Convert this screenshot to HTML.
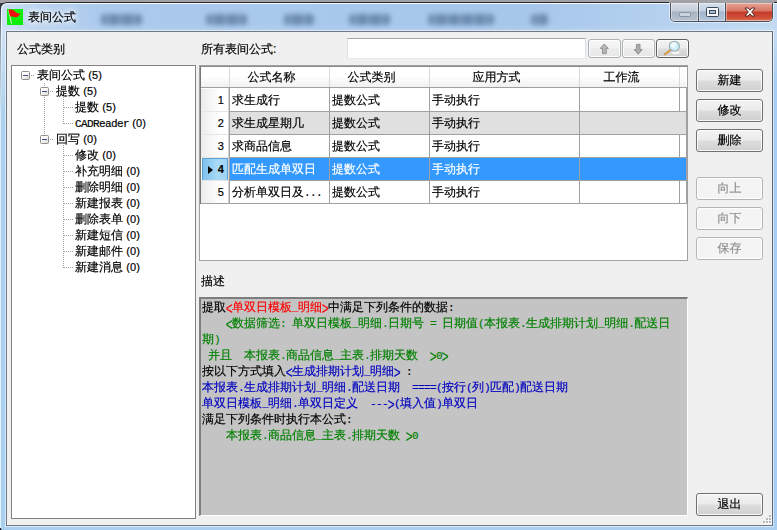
<!DOCTYPE html>
<html lang="zh-CN">
<head>
<meta charset="utf-8">
<title>表间公式</title>
<style>
*{box-sizing:border-box;margin:0;padding:0}
html,body{width:777px;height:530px;overflow:hidden;background:#3c3c3c}
body{position:relative;font-family:"Liberation Sans","WenQuanYi Zen Hei","Noto Sans CJK SC",sans-serif;font-size:12px;line-height:16px;color:#000;-webkit-text-stroke:.18px}
.abs{position:absolute}
.a{font-family:"Liberation Mono","WenQuanYi Zen Hei",monospace;font-size:11px;letter-spacing:-.6px}
/* window frame */
#top{left:0;top:0;width:777px;height:3px;background:#a3a1a6}
#win{left:0;top:2px;width:782px;height:540px;border:1px solid #262a2f;border-radius:7px 0 0 0;background:#a8c8ec;overflow:hidden}
#glass{left:0;top:0;width:780px;height:540px;border-left:1px solid #f4f9ff;border-top:1px solid #f4f9ff;border-radius:6px 0 0 0;
 background:linear-gradient(180deg,rgba(255,255,255,0) 0,rgba(255,255,255,0) 20px,rgba(255,255,255,.18) 30px,rgba(255,255,255,.1) 100%),linear-gradient(90deg,#cbdef3 0,#bad3ef 40px,#abcaec 100px,#a8c8ec 300px,#a6c6ea 520px,#b2cfee 640px,#c2daf2 777px)}
#client{left:6px;top:31px;width:767px;height:495px;background:#f0f0f0;border:1px solid #6f7884;border-right-color:#5f6975;border-bottom-color:#6f7884;box-shadow:0 0 0 1px rgba(255,255,255,.55)}
.blob{position:absolute;background:repeating-linear-gradient(90deg,#47678b 0,#6d8cb0 7px,#47678b 13px);filter:blur(2.5px);border-radius:4px;opacity:.7}

/* title */
#icon{left:7px;top:9px;width:16px;height:16px}
#title{left:28px;top:9px;height:16px;line-height:16px;font-size:12px;text-shadow:0 0 6px #fff,0 0 6px #fff,0 0 8px #fff}
#caps{left:670px;top:3px;width:103px;height:19px;border:1px solid #4a5260;border-top:none;border-radius:0 0 5px 5px;overflow:hidden;box-shadow:0 0 0 1px rgba(255,255,255,.55)}
#caps div{position:absolute;top:0;height:18px}
#bmin{left:0;width:28px;box-shadow:inset 0 0 0 1px rgba(255,255,255,.4);background:linear-gradient(#d9dfe8 0,#c4ccd8 45%,#a7b2c1 50%,#b8c2cf 100%);border-right:1px solid #4a5260}
#bmax{left:28px;width:27px;box-shadow:inset 0 0 0 1px rgba(255,255,255,.4);background:linear-gradient(#d6e1ee 0,#c0cfe0 45%,#a3b6cc 50%,#b5c6d9 100%);border-right:1px solid #4a5260}
#bclose{left:55px;width:47px;border-radius:0 0 4px 0;box-shadow:inset 0 0 0 1px rgba(255,255,255,.4);background:linear-gradient(#e8a596 0,#d67362 45%,#c43a26 50%,#d0523a 85%,#dd8163 100%)}
/* labels */
.lbl{height:16px;line-height:16px;white-space:nowrap}
/* tree */
#tree{left:11px;top:65px;width:185px;height:454px;background:#fff;border:1px solid #828282}
.tn{position:absolute;height:16px;line-height:16px;white-space:nowrap}
.pm{position:absolute;width:9px;height:9px;border:1px solid #8e8e8e;border-radius:1.5px;background:linear-gradient(135deg,#fff 0,#fff 40%,#d8d5cc 100%)}
.pm:after{content:"";position:absolute;left:1px;top:3px;width:5px;height:1px;background:#3b4c8c}
.dv{position:absolute;width:1px;background:repeating-linear-gradient(#a0a0a0 0 1px,transparent 1px 2px)}
.dh{position:absolute;height:1px;background:repeating-linear-gradient(90deg,#a0a0a0 0 1px,transparent 1px 2px)}
/* grid */
#gridbox{left:199px;top:65px;width:489px;height:196px;background:#fff;border:1px solid #a0a0a0}
#grid{left:200px;top:66px;width:487px;height:138px;background:#fff;border-left:1px solid #767676;border-top:1px solid #8a8a8a}
.hc{position:absolute;top:67px;height:20px;line-height:21px;text-align:center;padding-right:16px;background:linear-gradient(#fff 0,#fff 45%,#f1f1f1 100%);border-right:1px solid #dadada}
.row{position:absolute;left:201px;width:486px;height:23px}
.cell{position:absolute;top:0;height:23px;line-height:22px;padding-left:3px;white-space:nowrap;overflow:hidden}
.rh{position:absolute;left:0;top:0;width:27px;height:22px;line-height:22px;text-align:right;padding-right:4px;background:linear-gradient(90deg,#ececec 0,#fff 70%)}
.vl{position:absolute;width:1px;background:#a0a0a0}
.hl{position:absolute;height:1px;background:#a0a0a0}
/* buttons */
.btn{position:absolute;width:67px;height:23px;border:1px solid #707070;border-radius:3px;text-align:center;line-height:20px;
 background:linear-gradient(#f2f2f2 0,#ebebeb 48%,#dddddd 52%,#cfcfcf 100%);box-shadow:inset 0 0 0 1px rgba(255,255,255,.85)}
.btn.dis{border-color:#b2b6b9;background:#f4f4f4;color:#8e8e8e}
.sbtn{position:absolute;top:39px;height:19px;border:1px solid #adb2b5;border-radius:3px;background:linear-gradient(#f6f6f6 0,#f1f1f1 48%,#ebebeb 52%,#e8e8e8 100%);box-shadow:inset 0 0 0 1px rgba(255,255,255,.85)}
#search{left:347px;top:38px;width:239px;height:21px;background:#fff;border:1px solid #dbdfe6;border-top-color:#a4a6ac;border-bottom-color:#e3e9ef}
/* desc */
#desc{left:199px;top:297px;width:489px;height:219px;background:#c4c4c4;border-left:2px solid #7d7d7d;border-top:2px solid #7d7d7d;border-right:1px solid #fff;border-bottom:1px solid #fff}
#desctext{left:202px;top:299px;width:484px;line-height:16px;white-space:pre}
.dl{height:16px;line-height:16px;overflow:visible;white-space:pre}
.dl .a,.tn .a,.tn .c,.cell .a{line-height:0}
.k{display:inline-block;width:6px;height:0;font-family:"Liberation Mono",monospace;font-size:11px;letter-spacing:-.6px;line-height:0;transform:scale(1.05,1.5);transform-origin:50% -3px}
.c{font-family:"Liberation Sans",sans-serif;font-size:11px;letter-spacing:.15px}
.r{color:#ff0000}.g{color:#008000}.b{color:#0000c0}
</style>
</head>
<body>
<div id="top" class="abs"></div>
<div id="win" class="abs">
 <div id="glass" class="abs"></div>
 <div class="abs" style="left:0;top:20px;width:6px;height:520px;background:linear-gradient(rgba(169,208,238,0) 0,#a9d0ee 100px)"></div>
 <div class="abs" style="left:772px;top:20px;width:8px;height:520px;background:linear-gradient(rgba(169,205,242,0) 0,#a9cdf2 60px)"></div>
 <div class="abs" style="left:0;top:523px;width:780px;height:10px;background:#aacfef"></div>

</div>
<div class="blob" style="left:101px;top:14px;width:41px;height:11px"></div>
<div class="blob" style="left:206px;top:14px;width:41px;height:11px"></div>
<div class="blob" style="left:284px;top:14px;width:30px;height:11px"></div>
<div class="blob" style="left:349px;top:14px;width:41px;height:11px"></div>
<div class="blob" style="left:428px;top:14px;width:66px;height:11px"></div>
<div class="blob" style="left:531px;top:14px;width:17px;height:11px"></div>
<div class="abs" style="left:0;top:9px;width:1px;height:521px;background:linear-gradient(#3a3f47 0,#8d9aa9 28px,#dceffb 110px,#e0f4ff 100%)"></div>
<div id="client" class="abs"></div>

<svg id="icon" class="abs" viewBox="0 0 16 16"><rect width="16" height="16" fill="#0cee0c"/><path d="M1.7 1 L4.5 14.6" stroke="#e6f2dc" stroke-width="1" fill="none"/><path d="M1.5 0.9 C4 -0.2 6.5 0.8 8 2.6 C9.6 4.4 11.4 4.9 13.6 4.3 C12.4 6.8 10.4 8.4 8.2 8.2 C6.2 7.8 5 7 3.2 7.6 Z" fill="#f20d0d"/></svg>
<div id="title" class="abs">表间公式</div>
<div id="caps" class="abs"><div id="bmin"></div><div id="bmax"></div><div id="bclose"></div></div>
<div class="abs lbl" style="left:17px;top:41px">公式类别</div>
<div class="abs lbl" style="left:201px;top:41px">所有表间公式:</div>
<div id="search" class="abs"></div>
<div class="sbtn" style="left:588px;width:33px"></div>
<div class="sbtn" style="left:622px;width:33px"></div>
<div class="sbtn" style="left:656px;width:33px;border-color:#606060;background:linear-gradient(#f2f2f2 0,#ebebeb 48%,#dddddd 52%,#cfcfcf 100%)"></div>
<div id="tree" class="abs"></div>
<div class="tn" style="left:37px;top:67px">表间公式<span class="c"> (5)</span></div>
<div class="pm" style="left:21px;top:71px"></div>
<div class="dh" style="left:31px;top:75px;width:4px"></div>
<div class="tn" style="left:56px;top:83px">提数<span class="c"> (5)</span></div>
<div class="pm" style="left:40px;top:87px"></div>
<div class="dh" style="left:50px;top:91px;width:4px"></div>
<div class="tn" style="left:75px;top:99px">提数<span class="c"> (5)</span></div>
<div class="dh" style="left:64px;top:107px;width:9px"></div>
<div class="tn" style="left:75px;top:115px"><span class="a">CADReader</span><span class="c"> (0)</span></div>
<div class="dh" style="left:64px;top:123px;width:9px"></div>
<div class="tn" style="left:56px;top:131px">回写<span class="c"> (0)</span></div>
<div class="pm" style="left:40px;top:135px"></div>
<div class="dh" style="left:50px;top:139px;width:4px"></div>
<div class="tn" style="left:75px;top:147px">修改<span class="c"> (0)</span></div>
<div class="dh" style="left:64px;top:155px;width:9px"></div>
<div class="tn" style="left:75px;top:163px">补充明细<span class="c"> (0)</span></div>
<div class="dh" style="left:64px;top:171px;width:9px"></div>
<div class="tn" style="left:75px;top:179px">删除明细<span class="c"> (0)</span></div>
<div class="dh" style="left:64px;top:187px;width:9px"></div>
<div class="tn" style="left:75px;top:195px">新建报表<span class="c"> (0)</span></div>
<div class="dh" style="left:64px;top:203px;width:9px"></div>
<div class="tn" style="left:75px;top:211px">删除表单<span class="c"> (0)</span></div>
<div class="dh" style="left:64px;top:219px;width:9px"></div>
<div class="tn" style="left:75px;top:227px">新建短信<span class="c"> (0)</span></div>
<div class="dh" style="left:64px;top:235px;width:9px"></div>
<div class="tn" style="left:75px;top:243px">新建邮件<span class="c"> (0)</span></div>
<div class="dh" style="left:64px;top:251px;width:9px"></div>
<div class="tn" style="left:75px;top:259px">新建消息<span class="c"> (0)</span></div>
<div class="dh" style="left:64px;top:267px;width:9px"></div>
<div class="dv" style="left:44px;top:83px;height:4px"></div>
<div class="dv" style="left:44px;top:97px;height:38px"></div>
<div class="dv" style="left:63px;top:97px;height:27px"></div>
<div class="dv" style="left:63px;top:145px;height:123px"></div>
<div id="gridbox" class="abs"></div>
<div id="grid" class="abs"></div>
<div class="hc" style="left:201px;width:29px"></div>
<div class="hc" style="left:230px;width:100px">公式名称</div>
<div class="hc" style="left:330px;width:100px">公式类别</div>
<div class="hc" style="left:430px;width:150px">应用方式</div>
<div class="hc" style="left:580px;width:100px">工作流</div>
<div class="hc" style="left:680px;width:6px;padding:0;border-right:none"></div>
<div class="row" style="top:89px"><div class="rh"><span class="c">1</span></div><div class="cell" style="left:28px;width:458px;background:#fff"></div><div class="cell" style="left:28px;width:100px;color:#000">求生成行</div><div class="cell" style="left:128px;width:100px;color:#000">提数公式</div><div class="cell" style="left:228px;width:150px;color:#000">手动执行</div></div>
<div class="row" style="top:112px"><div class="rh"><span class="c">2</span></div><div class="cell" style="left:28px;width:458px;background:#e0e0e0"></div><div class="cell" style="left:28px;width:100px;color:#000">求生成星期几</div><div class="cell" style="left:128px;width:100px;color:#000">提数公式</div><div class="cell" style="left:228px;width:150px;color:#000">手动执行</div></div>
<div class="row" style="top:135px"><div class="rh"><span class="c">3</span></div><div class="cell" style="left:28px;width:458px;background:#fff"></div><div class="cell" style="left:28px;width:100px;color:#000">求商品信息</div><div class="cell" style="left:128px;width:100px;color:#000">提数公式</div><div class="cell" style="left:228px;width:150px;color:#000">手动执行</div></div>
<div class="row" style="top:158px"><div class="rh" style="background:linear-gradient(90deg,#7fc1ee 0,#a9daf6 60%,#9fd3f5 100%);border:1px solid #5aa2d8;line-height:20px;height:23px;left:1px;width:26px;padding-right:3px;font-weight:bold"><span class="abs" style="left:5px;top:7px;width:0;height:0;border-left:5px solid #000;border-top:4.5px solid transparent;border-bottom:4.5px solid transparent"></span><span class="c">4</span></div><div class="cell" style="left:28px;width:458px;background:#3399ff"></div><div class="cell" style="left:28px;width:100px;color:#fff">匹配生成单双日</div><div class="cell" style="left:128px;width:100px;color:#fff">提数公式</div><div class="cell" style="left:228px;width:150px;color:#fff">手动执行</div></div>
<div class="row" style="top:181px"><div class="rh"><span class="c">5</span></div><div class="cell" style="left:28px;width:458px;background:#fff"></div><div class="cell" style="left:28px;width:100px;color:#000">分析单双日及<span class="a">...</span></div><div class="cell" style="left:128px;width:100px;color:#000">提数公式</div><div class="cell" style="left:228px;width:150px;color:#000">手动执行</div></div>
<div class="vl" style="left:228px;top:88px;height:116px;background:#d4d4d4"></div><div class="vl" style="left:229px;top:87px;height:117px"></div>
<div class="vl" style="left:329px;top:87px;height:117px"></div>
<div class="vl" style="left:429px;top:87px;height:117px"></div>
<div class="vl" style="left:579px;top:87px;height:117px"></div>
<div class="vl" style="left:679px;top:87px;height:25px"></div><div class="vl" style="left:679px;top:134px;height:24px"></div><div class="vl" style="left:679px;top:180px;height:24px"></div>
<div class="vl" style="left:686px;top:88px;height:116px"></div>
<div class="hl" style="left:201px;top:87px;width:486px"></div>
<div class="hl" style="left:201px;top:111px;width:27px;background:#e6e6e6"></div><div class="hl" style="left:229px;top:111px;width:458px"></div>
<div class="hl" style="left:201px;top:134px;width:27px;background:#e6e6e6"></div><div class="hl" style="left:229px;top:134px;width:458px"></div>
<div class="hl" style="left:201px;top:157px;width:27px;background:#e6e6e6"></div><div class="hl" style="left:229px;top:157px;width:458px"></div>
<div class="hl" style="left:201px;top:180px;width:27px;background:#e6e6e6"></div><div class="hl" style="left:229px;top:180px;width:458px"></div>
<div class="hl" style="left:201px;top:203px;width:486px"></div>
<div class="btn" style="left:696px;top:69px">新建</div>
<div class="btn" style="left:696px;top:99px">修改</div>
<div class="btn" style="left:696px;top:129px">删除</div>
<div class="btn dis" style="left:696px;top:177px">向上</div>
<div class="btn dis" style="left:696px;top:207px">向下</div>
<div class="btn dis" style="left:696px;top:237px">保存</div>
<div class="btn" style="left:696px;top:493px">退出</div>
<div class="abs lbl" style="left:201px;top:273px">描述</div>
<div id="desc" class="abs"></div>
<div id="desctext" class="abs"><div class="dl">提取<span class="r"><span class="k">&lt;</span>单双日模板<span class="a">_</span>明细<span class="k">&gt;</span></span>中满足下列条件的数据<span class="a">:</span></div><div class="dl"><span class="g"><span class="a">    </span><span class="k">&lt;</span>数据筛选<span class="a">: </span>单双日模板<span class="a">_</span>明细<span class="a">.</span>日期号<span class="a"> = </span>日期值<span class="a">(</span>本报表<span class="a">.</span>生成排期计划<span class="a">_</span>明细<span class="a">.</span>配送日</span></div><div class="dl"><span class="g">期<span class="a">)</span></span></div><div class="dl"><span class="g"><span class="a"> </span>并且<span class="a">  </span>本报表<span class="a">.</span>商品信息<span class="a">_</span>主表<span class="a">.</span>排期天数<span class="a">  </span><span class="k">&gt;</span><span class="a">0</span><span class="k">&gt;</span></span></div><div class="dl">按以下方式填入<span class="b"><span class="k">&lt;</span>生成排期计划<span class="a">_</span>明细<span class="k">&gt;</span></span><span class="a"> :</span></div><div class="dl"><span class="b">本报表<span class="a">.</span>生成排期计划<span class="a">_</span>明细<span class="a">.</span>配送日期<span class="a">  ====(</span>按行<span class="a">(</span>列<span class="a">)</span>匹配<span class="a">)</span>配送日期</span></div><div class="dl"><span class="b">单双日模板<span class="a">_</span>明细<span class="a">.</span>单双日定义<span class="a">  ---</span><span class="k">&gt;</span><span class="a">(</span>填入值<span class="a">)</span>单双日</span></div><div class="dl">满足下列条件时执行本公式<span class="a">:</span></div><div class="dl"><span class="g"><span class="a">    </span>本报表<span class="a">.</span>商品信息<span class="a">_</span>主表<span class="a">.</span>排期天数<span class="a"> </span><span class="k">&gt;</span><span class="a">0</span></span></div></div>
<svg class="abs" style="left:670px;top:3px" width="104" height="20" viewBox="670 3 104 20">
<rect x="679.5" y="12.5" width="11" height="4" rx="1" fill="#c9d3de" stroke="#8593a5" stroke-width="1"/>
<rect x="706.5" y="7.5" width="12" height="9" rx="1" fill="#f4f7fa" stroke="#3c4656" stroke-width="1"/>
<rect x="709.5" y="10.5" width="6" height="3" fill="#a9bdd3" stroke="#3c4656" stroke-width="1"/>
<path d="M745 8 L748.2 8 L750 10.2 L751.8 8 L755 8 L751.7 12 L755 16 L751.8 16 L750 13.8 L748.2 16 L745 16 L748.3 12 Z" fill="#fff" stroke="#5b2a24" stroke-width="1" stroke-linejoin="round"/>
</svg>
<svg class="abs" style="left:586px;top:38px" width="104" height="22" viewBox="586 38 104 22">
<path d="M604.3 44 L608.4 48.4 L606.2 48.4 L606.2 53.6 L602.5 53.6 L602.5 48.4 L600.2 48.4 Z" fill="#b6b6b6" stroke="#8a8a8a" stroke-width=".9" stroke-linejoin="round"/>
<path d="M638.2 54.2 L642.2 49.6 L640 49.6 L640 44.4 L636.4 44.4 L636.4 49.6 L634.2 49.6 Z" fill="#adadad" stroke="#8a8a8a" stroke-width=".9" stroke-linejoin="round"/>
<ellipse cx="675.5" cy="52.6" rx="4.2" ry="1.6" fill="#ffffff" opacity=".75"/>
<path d="M670.4 50 L665 54.3" stroke="#b98a3a" stroke-width="2" stroke-linecap="round"/>
<path d="M670.4 49.8 L665 54.1" stroke="#e8a94a" stroke-width="1.1" stroke-linecap="round"/>
<circle cx="674.4" cy="46.2" r="5" fill="#cfeef6" stroke="#94aab2" stroke-width="1.1"/>
<circle cx="673.2" cy="45" r="2.6" fill="#ffffff" opacity=".75"/>
</svg>
<div class="abs" style="left:769px;top:515px;width:2px;height:2px;background:#b8b8b8;box-shadow:1px 1px 0 #fff"></div><div class="abs" style="left:766px;top:518px;width:2px;height:2px;background:#b8b8b8;box-shadow:1px 1px 0 #fff"></div><div class="abs" style="left:769px;top:518px;width:2px;height:2px;background:#b8b8b8;box-shadow:1px 1px 0 #fff"></div><div class="abs" style="left:763px;top:521px;width:2px;height:2px;background:#b8b8b8;box-shadow:1px 1px 0 #fff"></div><div class="abs" style="left:766px;top:521px;width:2px;height:2px;background:#b8b8b8;box-shadow:1px 1px 0 #fff"></div><div class="abs" style="left:769px;top:521px;width:2px;height:2px;background:#b8b8b8;box-shadow:1px 1px 0 #fff"></div>
<div class="abs" style="left:0;top:528px;width:1px;height:2px;background:#1c2230"></div><div class="abs" style="left:1px;top:529px;width:1px;height:1px;background:#5a6577"></div>

</body>
</html>
